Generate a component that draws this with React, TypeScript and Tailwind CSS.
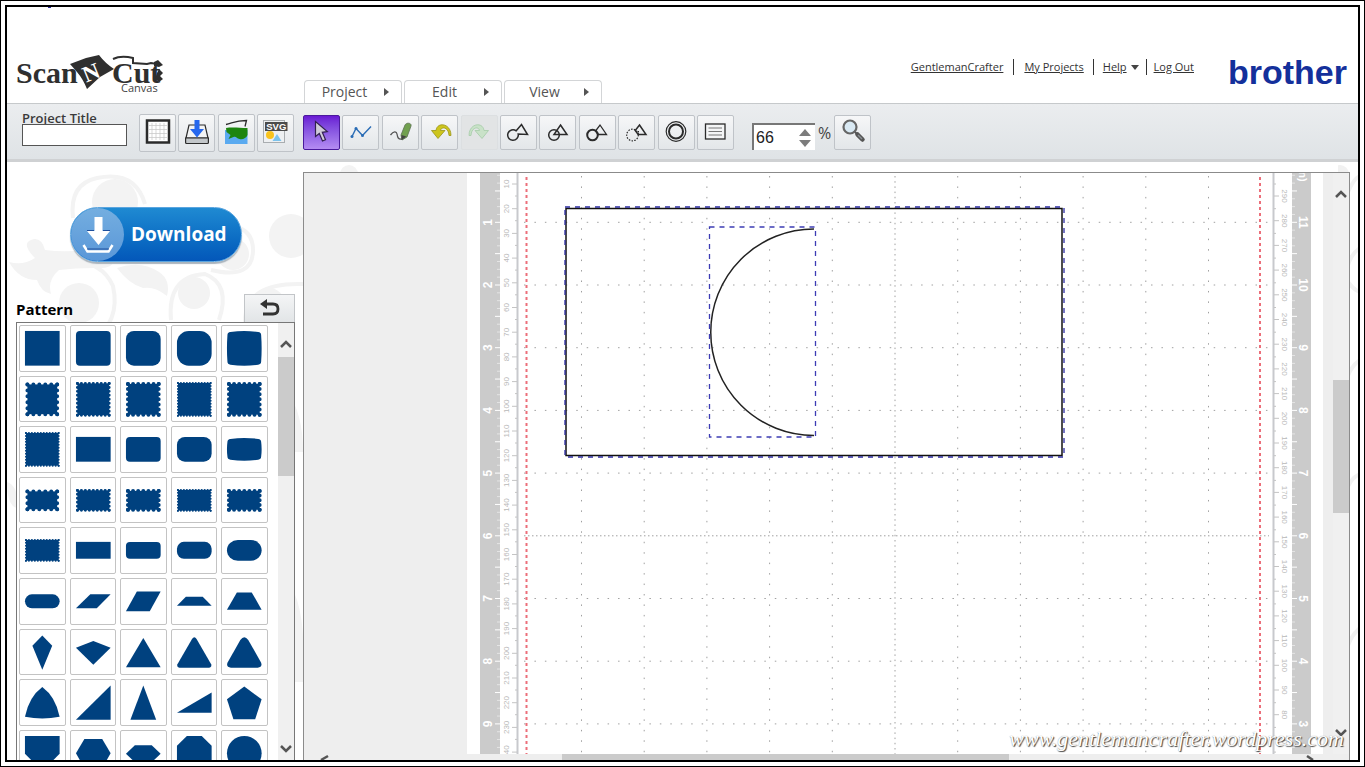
import { useState } from "react";
import type { ReactNode } from "react";

const INK = "#2b2b2b";
const NAVY = "#00417f";

const TABS = [
  { label: "Project", id: "project" },
  { label: "Edit", id: "edit" },
  { label: "View", id: "view" },
];

type Tool = { id: string; label: string; icon: ReactNode; disabled?: boolean };

const FILE_TOOLS: Tool[] = [
  {
    id: "mat",
    label: "Mat",
    icon: (
      <>
        <rect x="7" y="5.5" width="22" height="22" fill="#fff" stroke={INK} strokeWidth="2.5" />
        <path
          d="M12 8v17M16 8v17M20 8v17M24 8v17M9 10.5h18M9 14.5h18M9 18.5h18M9 22.5h18"
          stroke="#c4c4c4"
          strokeWidth="0.7"
        />
      </>
    ),
  },
  {
    id: "save",
    label: "Save",
    icon: (
      <>
        <path d="M10 10h16l3 13H7z" fill="#f3f4f5" stroke={INK} strokeWidth="1.2" />
        <path d="M6.6 23h22.8v4.5a1 1 0 0 1-1 1H7.6a1 1 0 0 1-1-1z" fill="#c3c7ca" stroke={INK} strokeWidth="1.2" />
        <path d="M15.5 5h5v9H25l-7 8.5L11 14h4.5z" fill="#2567ee" />
      </>
    ),
  },
  {
    id: "image",
    label: "Image",
    icon: (
      <>
        <rect x="7" y="15" width="22.5" height="14" fill="#5aaaf0" />
        <path d="M8 13c6-1 14 0 21.5 0v7c-1 3-5 5-8 4-3 0-3-3-6-2l-5 2 2-4-4-3z" fill="#1d850f" />
        <path d="M8 9.5c6-1 9-4 20.5-4l-1.5 6" fill="none" stroke={INK} strokeWidth="1.3" />
      </>
    ),
  },
  {
    id: "svg",
    label: "SVG import",
    icon: (
      <>
        <rect x="6.5" y="5.5" width="21" height="22" fill="#eef0f2" stroke="#a9adb0" />
        <rect x="8" y="7" width="22.5" height="9" fill="#4b4b4b" />
        <text x="19.3" y="15" textAnchor="middle" fontSize="9.5" fontWeight="700" fill="#fff" fontFamily="Liberation Sans, sans-serif">
          SVG
        </text>
        <circle cx="13" cy="20" r="4" fill="#f9c31d" />
        <path d="M20 19l4.5 7h-9z" fill="#7cc3ec" />
      </>
    ),
  },
];

const UNDO_PATH = "M29 20.5C29 8 15 6.5 14 15.5h-4.5l6.5 8 7-8h-4.5c.5-4 8-4 8.5 5z";

const EDIT_TOOLS: Tool[] = [
  {
    id: "select",
    label: "Select",
    icon: <path d="M11.5 6.5v15l3.8-3 3.2 7.5 3-1.3-3.2-7.4 5-.8z" fill="#cfcbd8" stroke="#32204f" strokeWidth="1.2" />,
  },
  {
    id: "path",
    label: "Path",
    icon: (
      <>
        <path d="M9 21.5l4-8 6.5 7L28 11.5" fill="none" stroke="#2a6cb5" strokeWidth="1.4" />
        <g fill="#2a6cb5">
          <circle cx="9" cy="21.5" r="1.5" />
          <circle cx="13" cy="13.5" r="1.5" />
          <circle cx="19.5" cy="20.5" r="1.5" />
        </g>
      </>
    ),
  },
  {
    id: "draw",
    label: "Draw",
    icon: (
      <>
        <path d="M8.5 20c3-4 6-4 6.5-1s1 6 5.5 5" fill="none" stroke="#555" strokeWidth="1.3" />
        <path d="M23 10c1.5-3 7-2 6 1l-4 11-5 3-1-5z" fill="#71a04f" stroke="#5b6f50" strokeWidth="0.8" />
        <path d="M19.5 20l4.8 1.6-4.7 3.4z" fill="#444" />
      </>
    ),
  },
  {
    id: "undo",
    label: "Undo",
    icon: <path d={UNDO_PATH} fill="#cdc51d" stroke="#9b9418" strokeWidth="0.8" />,
  },
  {
    id: "redo",
    label: "Redo",
    disabled: true,
    icon: <path d={UNDO_PATH} transform="matrix(-1 0 0 1 37 0)" fill="#c9e2c8" stroke="#a5cba7" strokeWidth="0.8" />,
  },
  {
    id: "weld",
    label: "Weld",
    icon: <path d="M16.2 15.8l5.3-6.3 6 10-9.3-.5a5.3 5.3 0 1 1-2-3.2z" fill="none" stroke={INK} strokeWidth="1.5" />,
  },
  {
    id: "divide",
    label: "Divide",
    icon: (
      <g fill="none" stroke={INK} strokeWidth="1.5">
        <circle cx="14" cy="20" r="5.3" />
        <path d="M20.5 10l6.5 9.5H14z" />
      </g>
    ),
  },
  {
    id: "subtract",
    label: "Subtract",
    icon: (
      <g fill="none" stroke={INK}>
        <circle cx="13.5" cy="20" r="5.3" strokeWidth="2" />
        <path d="M21 10l6.5 9.5h-8.3l-2.7-3.5z" strokeWidth="1.3" />
      </g>
    ),
  },
  {
    id: "intersect",
    label: "Intersect",
    icon: (
      <g fill="none" stroke={INK}>
        <circle cx="13.5" cy="20" r="5.8" strokeWidth="1.2" strokeDasharray="1.5 1.3" />
        <path d="M19.5 16v4.5" strokeWidth="1" strokeDasharray="1.5 1" />
        <path d="M20.5 10l6.5 9.5h-7.8l-3-4z" strokeWidth="1.5" />
      </g>
    ),
  },
  {
    id: "offset",
    label: "Offset",
    icon: (
      <g fill="none" stroke={INK}>
        <circle cx="18" cy="16.5" r="9.8" strokeWidth="1.2" />
        <circle cx="18" cy="16.5" r="7" strokeWidth="2" />
      </g>
    ),
  },
  {
    id: "properties",
    label: "Properties",
    icon: (
      <>
        <rect x="8.5" y="9" width="19.5" height="15" fill="#f4f5f6" stroke={INK} strokeWidth="1.3" />
        <path d="M11.5 13h13.5M11.5 16.5h13.5M11.5 20h13.5" stroke="#777" />
      </>
    ),
  },
];

type Shape = { d: string } | { rect: [number, number, number] } | { stamp: [number, number, number, number] };

// rect: width, height, radius; stamp: width, height, tooth pitch, tooth size
const PATTERNS: Shape[] = [
  { rect: [35, 35, 0] },
  { rect: [35, 35, 4] },
  { rect: [35, 35, 8] },
  { rect: [35, 35, 12] },
  { d: "M9 6.5q14-2 28 0q3 .5 3 3q1 13.5 0 27q0 2.5-3 3q-14 2-28 0q-3-.5-3-3q-1-13.5 0-27q0-2.5 3-3z" },
  { stamp: [30, 30, 6, 4] },
  { stamp: [32, 32, 4, 3] },
  { stamp: [31, 31, 5, 4] },
  { stamp: [33, 33, 3, 2] },
  { stamp: [31, 31, 5, 4] },
  { stamp: [33, 33, 3, 2] },
  { rect: [35, 25, 0] },
  { rect: [35, 25, 4] },
  { rect: [35, 25, 8] },
  { d: "M9 12.5q14-2 28 0q3 .5 3 3q1 7.5 0 15q0 2.5-3 3q-14 2-28 0q-3-.5-3-3q-1-7.5 0-15q0-2.5 3-3z" },
  { stamp: [30, 18, 6, 4] },
  { stamp: [32, 20, 4, 3] },
  { stamp: [31, 19, 5, 4] },
  { stamp: [33, 21, 3, 2] },
  { stamp: [31, 19, 5, 4] },
  { stamp: [33, 21, 3, 2] },
  { rect: [35, 17, 0] },
  { rect: [35, 17, 4] },
  { rect: [35, 17, 7] },
  { rect: [35, 21, 11] },
  { rect: [35, 14, 7] },
  { d: "M20 16h20.5l-14 14H5.5z" },
  { d: "M16.5 13h24l-11 20h-24z" },
  { d: "M14.5 18.5h17l9 9h-35z" },
  { d: "M15.5 14h15l10 17.5h-35z" },
  { d: "M23 6l10 10.5L23 40.5 13 16.5z" },
  { d: "M23 11.5l17.5 7L23 35.5 5.5 18.5z" },
  { d: "M23 8.5L40.5 38h-35z" },
  { d: "M20.7 9.5q2.3-3.5 4.6 0L40 35q1 3-2 3.5H8q-3-.5-2-3.5z" },
  { d: "M19 10.5q4-5.5 8 0L40 33.5q1.5 4.5-3.5 5h-27q-5-.5-3.5-5z" },
  { d: "M23 7.5q13.5 10 17.5 30q-17.5 3.5-35 0q4-20 17.5-30z" },
  { d: "M40.5 6v34.5h-35z" },
  { d: "M23 6l13 34.5H10z" },
  { d: "M40.5 13v20.5h-35z" },
  { d: "M23 7l17.5 13-6.5 20H12L5.5 20z" },
  { d: "M5.5 5.5h35v18L31 33H15L5.5 23.5z" },
  { d: "M14 8.5h18l8.5 14.5L32 38H14L5.5 23z" },
  { d: "M14.5 15h17l9 8.5-9 8.5h-17l-9-8.5z" },
  { d: "M15.5 5.5h15l10 10v15l-10 10h-15l-10-10v-15z" },
  { d: "M23 5.5a17.5 17.5 0 1 1 0 35a17.5 17.5 0 1 1 0-35z" },
];

function PatternShape({ shape }: { shape: Shape }) {
  if ("d" in shape) return <path d={shape.d} fill={NAVY} />;
  if ("rect" in shape) {
    const [w, h, r] = shape.rect;
    return <rect x={23 - w / 2} y={23 - h / 2} width={w} height={h} rx={r} fill={NAVY} />;
  }
  const [w, h, pitch, tooth] = shape.stamp;
  const px = w / Math.round(w / pitch);
  const py = h / Math.round(h / pitch);
  const x = 23 - w / 2;
  const y = 23 - h / 2;
  // edges run slightly long so the last tooth lands on the corner
  const ex = w + 0.1;
  const ey = h + 0.1;
  return (
    <g stroke={NAVY} strokeWidth={tooth} strokeLinecap="round">
      <rect x={x} y={y} width={w} height={h} fill={NAVY} stroke="none" />
      <path d={`M${x} ${y}h${ex}M${x} ${y + h}h${ex}`} strokeDasharray={`0 ${px}`} />
      <path d={`M${x} ${y}v${ey}M${x + w} ${y}v${ey}`} strokeDasharray={`0 ${py}`} />
    </g>
  );
}

function ToolButton({ tool, active, tall, onClick }: { tool: Tool; active?: boolean; tall?: boolean; onClick?: () => void }) {
  const look = active
    ? "border-[#4a1a9c] bg-linear-to-b from-[#6a17d3] to-[#b58cf2]"
    : tool.disabled
      ? "border-[#dcdfe1] bg-[#e2e4e5]"
      : "border-[#bfc3c8] bg-linear-to-b from-[#f6f7f8] to-[#e3e6e9]";
  return (
    <button
      type="button"
      aria-label={tool.label}
      disabled={tool.disabled}
      onClick={onClick}
      className={`flex w-[37px] shrink-0 items-center justify-center rounded-xs border ${tall ? "h-[38px]" : "h-[35px]"} ${look}`}
    >
      <svg viewBox="0 0 36 36" className="size-9 shrink-0">
        {tool.icon}
      </svg>
    </button>
  );
}

function ScanNCutLogo() {
  return (
    <svg viewBox="0 0 148 40" className="h-10 w-[148px]" role="img" aria-label="ScanNCut Canvas">
      <g fill="#2f2f2f" fontFamily="Liberation Serif, serif" fontWeight="700">
        <text x="0" y="28" fontSize="30">
          Scan
        </text>
        <text x="96" y="28" fontSize="30">
          Cut
        </text>
      </g>
      <path d="M54 9l16-6 13-3q6 8 15 14l-14 8-13 12q-4-10-10-17z" fill="#2f2f2f" />
      <text x="67" y="25" fontSize="23" fontWeight="700" fill="#fff" fontFamily="Liberation Serif, serif" transform="rotate(-22 76 18)">
        N
      </text>
      <path d="M97 4q8-4 20-1v5l14 1 4-1 6 1" fill="none" stroke="#2f2f2f" strokeWidth="2" />
      <path d="M138 7l4-2 5 5-4 2-5-1zM143 14l4 4-3 3 3 3-4 3-4-3 2-6z" fill="#2f2f2f" />
      <text x="105" y="37" fontSize="11" fill="#444" fontFamily="Open Sans, sans-serif">
        Canvas
      </text>
    </svg>
  );
}

function Flourish() {
  return (
    <>
      <svg viewBox="0 0 296 600" className="absolute top-0 left-0 -z-10 h-[600px] w-[296px] overflow-visible" aria-hidden="true">
        <g fill="#f3f3f3">
          <circle cx="108" cy="40" r="23" />
          <circle cx="284" cy="74" r="22" />
          <circle cx="72" cy="141" r="20" />
          <circle cx="187" cy="131" r="16" />
          <circle cx="226" cy="92" r="16" />
          <circle cx="262" cy="142" r="16" />
          <circle cx="342" cy="12" r="9" />
          <path d="M2 100q14 4 26-4q-14-14-4-18q10-4 14 10q30 4 60-4q20 24-10 22q-20 0-36 2q-12 10-8 24q-10-2-14-14q-18 0-28-18z" />
          <path d="M110 106q24-8 42 4q12 8 8 24q-12-10-24-8q-14-4-26-20z" />
          <path d="M280 230q16 20 16 60h-16zM280 420q20 20 16 100h-16zM0 320q12 4 10 26q-10-2-10-26z" />
        </g>
        <g fill="none" stroke="#f3f3f3" strokeWidth="4">
          <path d="M66 56q-4-34 24-40q38-8 48 26" />
          <path d="M84 180q30-20 22-56q-12-26-44-24" />
          <path d="M164 158q-4-44 34-46q26 10 14 46" />
          <path d="M204 108q42 10 42-20q0-20-20-24" />
          <path d="M238 160q0-40 58-38" />
        </g>
      </svg>
      <svg viewBox="0 0 20 600" className="absolute top-0 right-0 -z-10 h-[600px] w-5" aria-hidden="true">
        <g fill="none" stroke="#f1f1f1" strokeWidth="4">
          <path d="M10 30q6-14 12-16M8 110q4-18 14-24M10 120q6 8 12 10M8 220q4-16 14-22M8 330q4-14 14-18M8 490q4-16 14-24" />
        </g>
        <circle cx="2" cy="12" r="9" fill="#f1f1f1" />
      </svg>
    </>
  );
}

function Chevron({ dir }: { dir: "up" | "down" }) {
  return (
    <svg viewBox="0 0 14 10" className="h-[10px] w-[14px]">
      <path d={dir === "up" ? "M2 8l5-5 5 5" : "M2 2l5 5 5-5"} fill="none" stroke="#555" strokeWidth="2.5" />
    </svg>
  );
}

const INCH = 62.7;
const TOP_INCH = 49.3;

// Cutting mat: rulers on both sides, dotted inch grid and the placed shapes
function Mat() {
  const rows = Array.from({ length: 9 }, (_, i) => ({ n: i + 1, y: TOP_INCH + i * INCH }));
  const cols = Array.from({ length: 11 }, (_, i) => 114.5 + i * INCH);
  const eighths = Array.from({ length: 75 }, (_, i) => ({ i, y: TOP_INCH - INCH + (i + 1) * (INCH / 8) }));
  const centimetres = Array.from({ length: 24 }, (_, i) => ({ i, y: 11 + i * 24.7 }));
  return (
    <svg viewBox="0 0 856 581" className="h-[581px] w-[856px] shrink-0 bg-white" fontFamily="Liberation Sans, sans-serif">
      <rect x="13" y="0" width="20" height="581" fill="#cbcbcb" />
      <rect x="825" y="0" width="19" height="581" fill="#cbcbcb" />
      <path d="M50.5 0v581M806.5 0v581" stroke="#c8c9cd" strokeWidth="2" />

      {eighths.map(({ i, y }) => {
        const len = (i + 1) % 4 === 0 ? 5 : 3;
        return <path key={i} d={`M${33 - len} ${y}h${len}M825 ${y}h${len}`} stroke="#fff" strokeOpacity={len === 5 ? 1 : 0.5} />;
      })}
      {rows.map(({ n, y }) => (
        <g key={n} fill="#fff" fontSize="12" fontWeight="700" textAnchor="middle">
          <text transform={`translate(25 ${y}) rotate(-90)`}>{n}</text>
          <text transform={`translate(832 ${y}) rotate(90)`}>{12 - n}</text>
        </g>
      ))}
      <text transform="translate(832 0) rotate(90)" fontSize="11" fontWeight="700" fill="#fff" textAnchor="middle">
        (in)
      </text>
      {centimetres.map(({ i, y }) => (
        <g key={i} fill="#b9b9b9" fontSize="8" textAnchor="middle">
          <text transform={`translate(42 ${y}) rotate(-90)`}>{(i + 1) * 10}</text>
          {i < 23 && <text transform={`translate(815 ${y + 12}) rotate(90)`}>{290 - i * 10}</text>}
          <path d={`M45 ${y}h5M48 ${y + 12}h2M807 ${y + 12}h5M807 ${y}h2`} stroke="#c4c4c4" />
        </g>
      ))}

      <g stroke="#a0a0a0" strokeWidth="1">
        {cols.map((x, i) => (
          <path key={x} d={`M${x} 3v578`} strokeDasharray={i === 5 ? "1.5 3.7" : "1.5 8.95"} />
        ))}
        {rows.map(({ n, y }) => (
          <path key={n} d={`M57 ${y}h745`} strokeDasharray={n === 6 ? "1.5 2.5" : "1.5 8.95"} />
        ))}
      </g>
      <path d="M59.5 4v577M793 4v577" stroke="#ec6f7a" strokeWidth="2" strokeDasharray="3 3" />

      <rect x="99" y="35.5" width="496" height="247" fill="none" stroke="#111" strokeWidth="1.5" />
      <rect x="98" y="34" width="499" height="250" fill="none" stroke="#2c2ca0" strokeWidth="1.3" strokeDasharray="5 5" />
      <path d="M347 56A103 103 0 0 0 347 262.5" fill="none" stroke="#222" strokeWidth="1.5" />
      <rect x="242.5" y="54" width="106" height="210" fill="none" stroke="#3c3cb4" strokeWidth="1.3" strokeDasharray="5 5" />
    </svg>
  );
}

export default function App() {
  const [tool, setTool] = useState("select");
  const [title, setTitle] = useState("");
  const [zoom, setZoom] = useState(66);

  return (
    <div className="h-screen border border-black bg-white p-1 font-['Open_Sans',sans-serif] text-[#333]">
      <div className="relative flex h-full flex-col overflow-hidden border-2 border-black">
        <span className="absolute top-0 left-[41px] h-px w-[3px] bg-[#2c2ca0]" />
        {/* Header */}
        <header className="flex h-24 shrink-0 items-end pr-[11px] pl-[9px]">
          <div className="mb-2 w-[288px] shrink-0">
            <ScanNCutLogo />
          </div>
          <nav className="flex gap-[2px]">
            {TABS.map((tab) => (
              <button
                key={tab.id}
                type="button"
                className="flex h-[23px] w-[98px] items-center rounded-t-sm border border-b-0 border-[#d3d5d7] bg-white text-sm text-[#555]"
              >
                <span className="flex-1 text-center">{tab.label}</span>
                <svg viewBox="0 0 5 8" className="mr-3 h-2 w-[5px]">
                  <path d="M0 0l5 4-5 4z" fill="#555" />
                </svg>
              </button>
            ))}
          </nav>
          <div className="mb-[15px] ml-auto flex items-start">
            <div className="mr-[34px] flex items-center pt-[3px] text-[11px] leading-4">
              <a href="#account" className="underline">
                GentlemanCrafter
              </a>
              <span className="mx-[10px] h-4 w-px bg-[#333]" />
              <a href="#projects" className="underline">
                My Projects
              </a>
              <span className="mx-[9px] h-4 w-px bg-[#333]" />
              <a href="#help" className="underline">
                Help
              </a>
              <svg viewBox="0 0 8 5" className="ml-1 h-[5px] w-2">
                <path d="M0 0h8L4 5z" fill="#444" />
              </svg>
              <span className="mx-[7px] h-4 w-px bg-[#333]" />
              <a href="#logout" className="underline">
                Log Out
              </a>
            </div>
            <span className="font-['Liberation_Sans',sans-serif] text-[34px] leading-8 font-bold text-[#14309b]">brother</span>
          </div>
        </header>

        {/* Toolbar */}
        <div className="flex h-[59px] shrink-0 items-center border-t border-b-3 border-t-[#c6c9cb] border-b-[#cfd1d3] bg-linear-to-b from-[#ebedef] to-[#dfe3e6] pt-[2px] pl-[15px]">
          <div className="mr-3 flex w-[105px] shrink-0 flex-col pb-2">
            <label htmlFor="project-title" className="text-[13px] leading-3 font-semibold text-[#3a3a3a]">
              Project Title
            </label>
            <input
              id="project-title"
              value={title}
              onChange={(e) => setTitle(e.target.value)}
              className="h-[22px] w-full border border-[#555] bg-white px-1 text-xs"
            />
          </div>
          <div className="mr-[9px] flex w-[155px] shrink-0 justify-between">
            {FILE_TOOLS.map((t) => (
              <ToolButton key={t.id} tool={t} tall />
            ))}
          </div>
          <div className="flex w-[431px] shrink-0 items-center justify-between">
            {EDIT_TOOLS.map((t) => (
              <ToolButton key={t.id} tool={t} active={t.id === tool} onClick={() => setTool(t.id)} />
            ))}
          </div>
          <div className="mt-2 ml-[18px] flex h-[27px] w-[63px] items-center border-t-2 border-l-2 border-[#777] bg-white">
            <input
              aria-label="Zoom percent"
              value={zoom}
              onChange={(e) => setZoom(Number(e.target.value) || 0)}
              className="w-full min-w-0 flex-1 pl-[2px] font-['Liberation_Sans',sans-serif] text-base text-[#222]"
            />
            <div className="mr-1 flex flex-col gap-1">
              <button type="button" aria-label="Zoom in" onClick={() => setZoom(zoom + 1)}>
                <svg viewBox="0 0 12 7" className="h-[7px] w-3">
                  <path d="M6 0l6 7H0z" fill="#7c7c7c" />
                </svg>
              </button>
              <button type="button" aria-label="Zoom out" onClick={() => setZoom(zoom - 1)}>
                <svg viewBox="0 0 12 7" className="h-[7px] w-3">
                  <path d="M0 0h12L6 7z" fill="#7c7c7c" />
                </svg>
              </button>
            </div>
          </div>
          <span className="mx-[3px] text-base text-[#444]">%</span>
          <ToolButton
            tool={{
              id: "zoom",
              label: "Apply zoom",
              icon: (
                <>
                  <circle cx="15" cy="12" r="6.5" fill="#d9e9f3" stroke="#666" strokeWidth="2.2" />
                  <path d="M20 17l3 3" stroke="#555" strokeWidth="2" />
                  <path d="M22.5 19.5l5 5" stroke="#555" strokeWidth="4.5" strokeLinecap="round" />
                  <path d="M23 20l4 4" stroke="#8a8f94" strokeWidth="1.5" />
                </>
              ),
            }}
          />
        </div>

        {/* Workspace */}
        <div className="relative isolate flex min-h-0 flex-1">
          <Flourish />
          <aside className="flex w-[296px] shrink-0 flex-col pr-2 pl-[9px]">
            <div className="flex h-[132px] shrink-0 items-start pt-[45px] pl-[54px]">
              <button
                type="button"
                className="flex h-[55px] w-[172px] items-center rounded-full border border-[#5ba5df] bg-linear-to-b from-[#1f8ad2] to-[#0457b9] text-white shadow-[0_2px_1px_#aab4bd]"
              >
                <span className="flex size-[53px] shrink-0 items-center justify-center rounded-full bg-linear-to-b from-[#74aee0] to-[#5a97d8]">
                  <svg viewBox="0 0 32 38" className="h-[38px] w-8">
                    <path d="M12.5 1h8v14H28L16.5 29 5 15h7.5z" fill="#fff" />
                    <path d="M5 14.5h7M21 14.5h7" stroke="#1f4f9c" />
                    <path d="M1.5 29l4 6.5h21l4-6.5" fill="none" stroke="#fff" strokeWidth="2.5" />
                    <path d="M5 33h22" stroke="#1f4f9c" />
                  </svg>
                </span>
                <span className="pl-[7px] text-[19px] font-bold">Download</span>
              </button>
            </div>
            <div className="flex h-[28px] shrink-0 items-end justify-between">
              <h2 className="text-[15px] leading-[26px] font-bold text-black">Pattern</h2>
              <button
                type="button"
                aria-label="Back"
                className="flex h-[28px] w-[51px] items-center justify-center border border-b-0 border-[#c2c5c8] bg-linear-to-b from-[#f4f5f6] to-[#e2e5e7]"
              >
                <svg viewBox="0 0 24 20" className="h-5 w-6">
                  <path d="M6 5h9q5 0 5 5t-5 5H5" fill="none" stroke="#333" strokeWidth="2.8" />
                  <path d="M2 5l7-5v10z" fill="#333" />
                </svg>
              </button>
            </div>
            <div className="flex min-h-0 flex-1 overflow-hidden border border-b-0 border-[#777] bg-white">
              <ul className="grid flex-1 grid-cols-5 content-start gap-1 pt-[2px] pr-[10px] pl-[2px]">
                {PATTERNS.map((shape, i) => (
                  <li key={i} className="aspect-square">
                    <button type="button" aria-label={`Pattern ${i + 1}`} className="block size-full rounded-xs border border-[#c3c3c3] bg-white">
                      <svg viewBox="0.5 0.5 45 45" className="size-full">
                        <PatternShape shape={shape} />
                      </svg>
                    </button>
                  </li>
                ))}
              </ul>
              <div className="flex w-4 shrink-0 flex-col items-center bg-[#f0f0f0]">
                <div className="flex h-[34px] shrink-0 items-end pb-2">
                  <Chevron dir="up" />
                </div>
                <div className="h-[119px] w-full shrink-0 bg-[#cbcbcb]" />
                <div className="mt-auto pb-[6px]">
                  <Chevron dir="down" />
                </div>
              </div>
            </div>
          </aside>

          <main className="mt-[10px] mr-2 flex min-w-0 flex-1 flex-col border border-b-0 border-[#8b8b8b] bg-[#eee]">
            <div className="flex min-h-0 flex-1">
              <div className="mr-[10px] flex min-w-0 flex-1 justify-end overflow-hidden">
                <Mat />
              </div>
              <div className="flex w-4 shrink-0 flex-col items-center bg-[#f0f0f0]">
                <div className="flex h-[207px] shrink-0 items-start pt-4">
                  <Chevron dir="up" />
                </div>
                <div className="h-[133px] w-full shrink-0 bg-[#cbcbcb]" />
                <div className="mt-auto pb-4">
                  <Chevron dir="down" />
                </div>
              </div>
            </div>
            <div className="flex h-[6px] shrink-0 bg-[#eee]">
              <svg viewBox="0 0 10 6" className="ml-4 h-[6px] w-[10px]">
                <path d="M1 6l7-4" stroke="#555" strokeWidth="2.5" />
              </svg>
              <div className="ml-[232px] w-[447px] bg-[#cbcbcb]" />
              <svg viewBox="0 0 10 6" className="mr-[34px] ml-auto h-[6px] w-[10px]">
                <path d="M2 2l6 4" stroke="#555" strokeWidth="2.5" />
              </svg>
            </div>
          </main>
        </div>

        <p className="pointer-events-none absolute right-[14px] bottom-[7px] font-['Liberation_Serif',serif] text-[22px] leading-7 text-white italic [text-shadow:1px_1px_1px_#444,0_0_1px_#888]">
          www.gentlemancrafter.wordpress.com
        </p>
      </div>
    </div>
  );
}
